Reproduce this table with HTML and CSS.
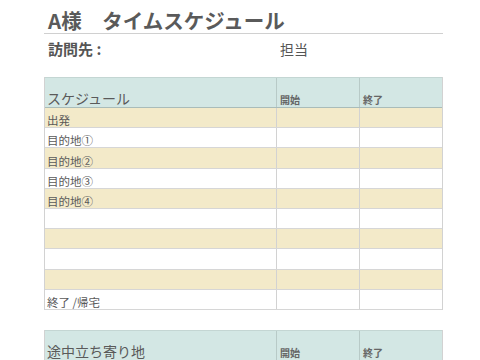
FILE: index.html
```html
<!DOCTYPE html>
<html lang="ja">
<head>
<meta charset="utf-8">
<link rel="stylesheet" href="styles.css">
</head>
<body>
<div class="page">
  <h1 class="title">A様　タイムスケジュール</h1>
  <div class="info">
    <span class="visit">訪問先 :</span>
    <span class="staff">担当</span>
  </div>
  <div class="sheet">
    <div class="head">
      <div class="cell main">スケジュール</div>
      <div class="cell small">開始</div>
      <div class="cell small">終了</div>
    </div>
    <div class="row tan"><div class="cell">出発</div><div class="cell"></div><div class="cell"></div></div>
    <div class="row"><div class="cell">目的地①</div><div class="cell"></div><div class="cell"></div></div>
    <div class="row tan"><div class="cell">目的地②</div><div class="cell"></div><div class="cell"></div></div>
    <div class="row"><div class="cell">目的地③</div><div class="cell"></div><div class="cell"></div></div>
    <div class="row tan"><div class="cell">目的地④</div><div class="cell"></div><div class="cell"></div></div>
    <div class="row"><div class="cell"></div><div class="cell"></div><div class="cell"></div></div>
    <div class="row tan"><div class="cell"></div><div class="cell"></div><div class="cell"></div></div>
    <div class="row"><div class="cell"></div><div class="cell"></div><div class="cell"></div></div>
    <div class="row tan"><div class="cell"></div><div class="cell"></div><div class="cell"></div></div>
    <div class="row"><div class="cell">終了 /帰宅</div><div class="cell"></div><div class="cell"></div></div>
  </div>
  <div class="sheet second">
    <div class="head">
      <div class="cell main">途中立ち寄り地</div>
      <div class="cell small">開始</div>
      <div class="cell small">終了</div>
    </div>
    <div class="row tan"><div class="cell"></div><div class="cell"></div><div class="cell"></div></div>
  </div>
</div>
</body>
</html>
```

FILE: styles.css
```css
html, body {
  margin: 0;
  padding: 0;
  background: #ffffff;
}
body {
  font-family: "Noto Sans CJK JP", "Noto Sans", sans-serif;
  color: #555555;
  overflow: hidden;
}
.page {
  margin-left: 44px;
  width: 399px;
}
.title {
  margin: 0;
  box-sizing: border-box;
  height: 34px;
  padding: 10px 0 0 4px;
  font-size: 20.5px;
  line-height: 21px;
  font-weight: bold;
  color: #5a5a5a;
  border-bottom: 1px solid #d0d0d0;
}
.info {
  display: grid;
  grid-template-columns: 232px auto;
  padding: 6px 0 0 4px;
  height: 37px;
  box-sizing: border-box;
  font-size: 14px;
  line-height: 18px;
}
.visit {
  font-weight: bold;
  font-size: 15px;
}
.staff {
  padding-top: 0;
}
.sheet {
  border-left: 1px solid #d2d2d2;
  border-right: 1px solid #d2d2d2;
  margin-top: 6px;
}
.sheet.second {
  margin-top: 20px;
}
.head, .row {
  display: grid;
  grid-template-columns: 232px 83px 83px;
  box-sizing: border-box;
}
.head {
  height: 31px;
  background: #d3e7e4;
  border-top: 1px solid #c4d6d3;
  border-bottom: 1px solid #a9bcb9;
}
.row {
  height: 20.2px;
  border-bottom: 1px solid #d6d6d6;
  background: #ffffff;
}
.row.tan {
  background: #f3eac9;
}
.cell {
  border-right: 1px solid #d2d2d2;
  display: flex;
  align-items: flex-end;
  padding-left: 2px;
  font-size: 11.5px;
  line-height: 14px;
  color: #5a5a5a;
  white-space: nowrap;
}
.cell:last-child {
  border-right: none;
}
.head .cell {
  border-right-color: #b8cac7;
}
.head .cell:last-child {
  border-right: none;
}
.head .main {
  font-size: 14px;
  line-height: 18px;
  padding-bottom: 0;
}
.head .small {
  font-size: 10px;
  line-height: 13px;
  font-weight: bold;
  color: #666666;
  padding-left: 3px;
  padding-bottom: 1px;
}
```
